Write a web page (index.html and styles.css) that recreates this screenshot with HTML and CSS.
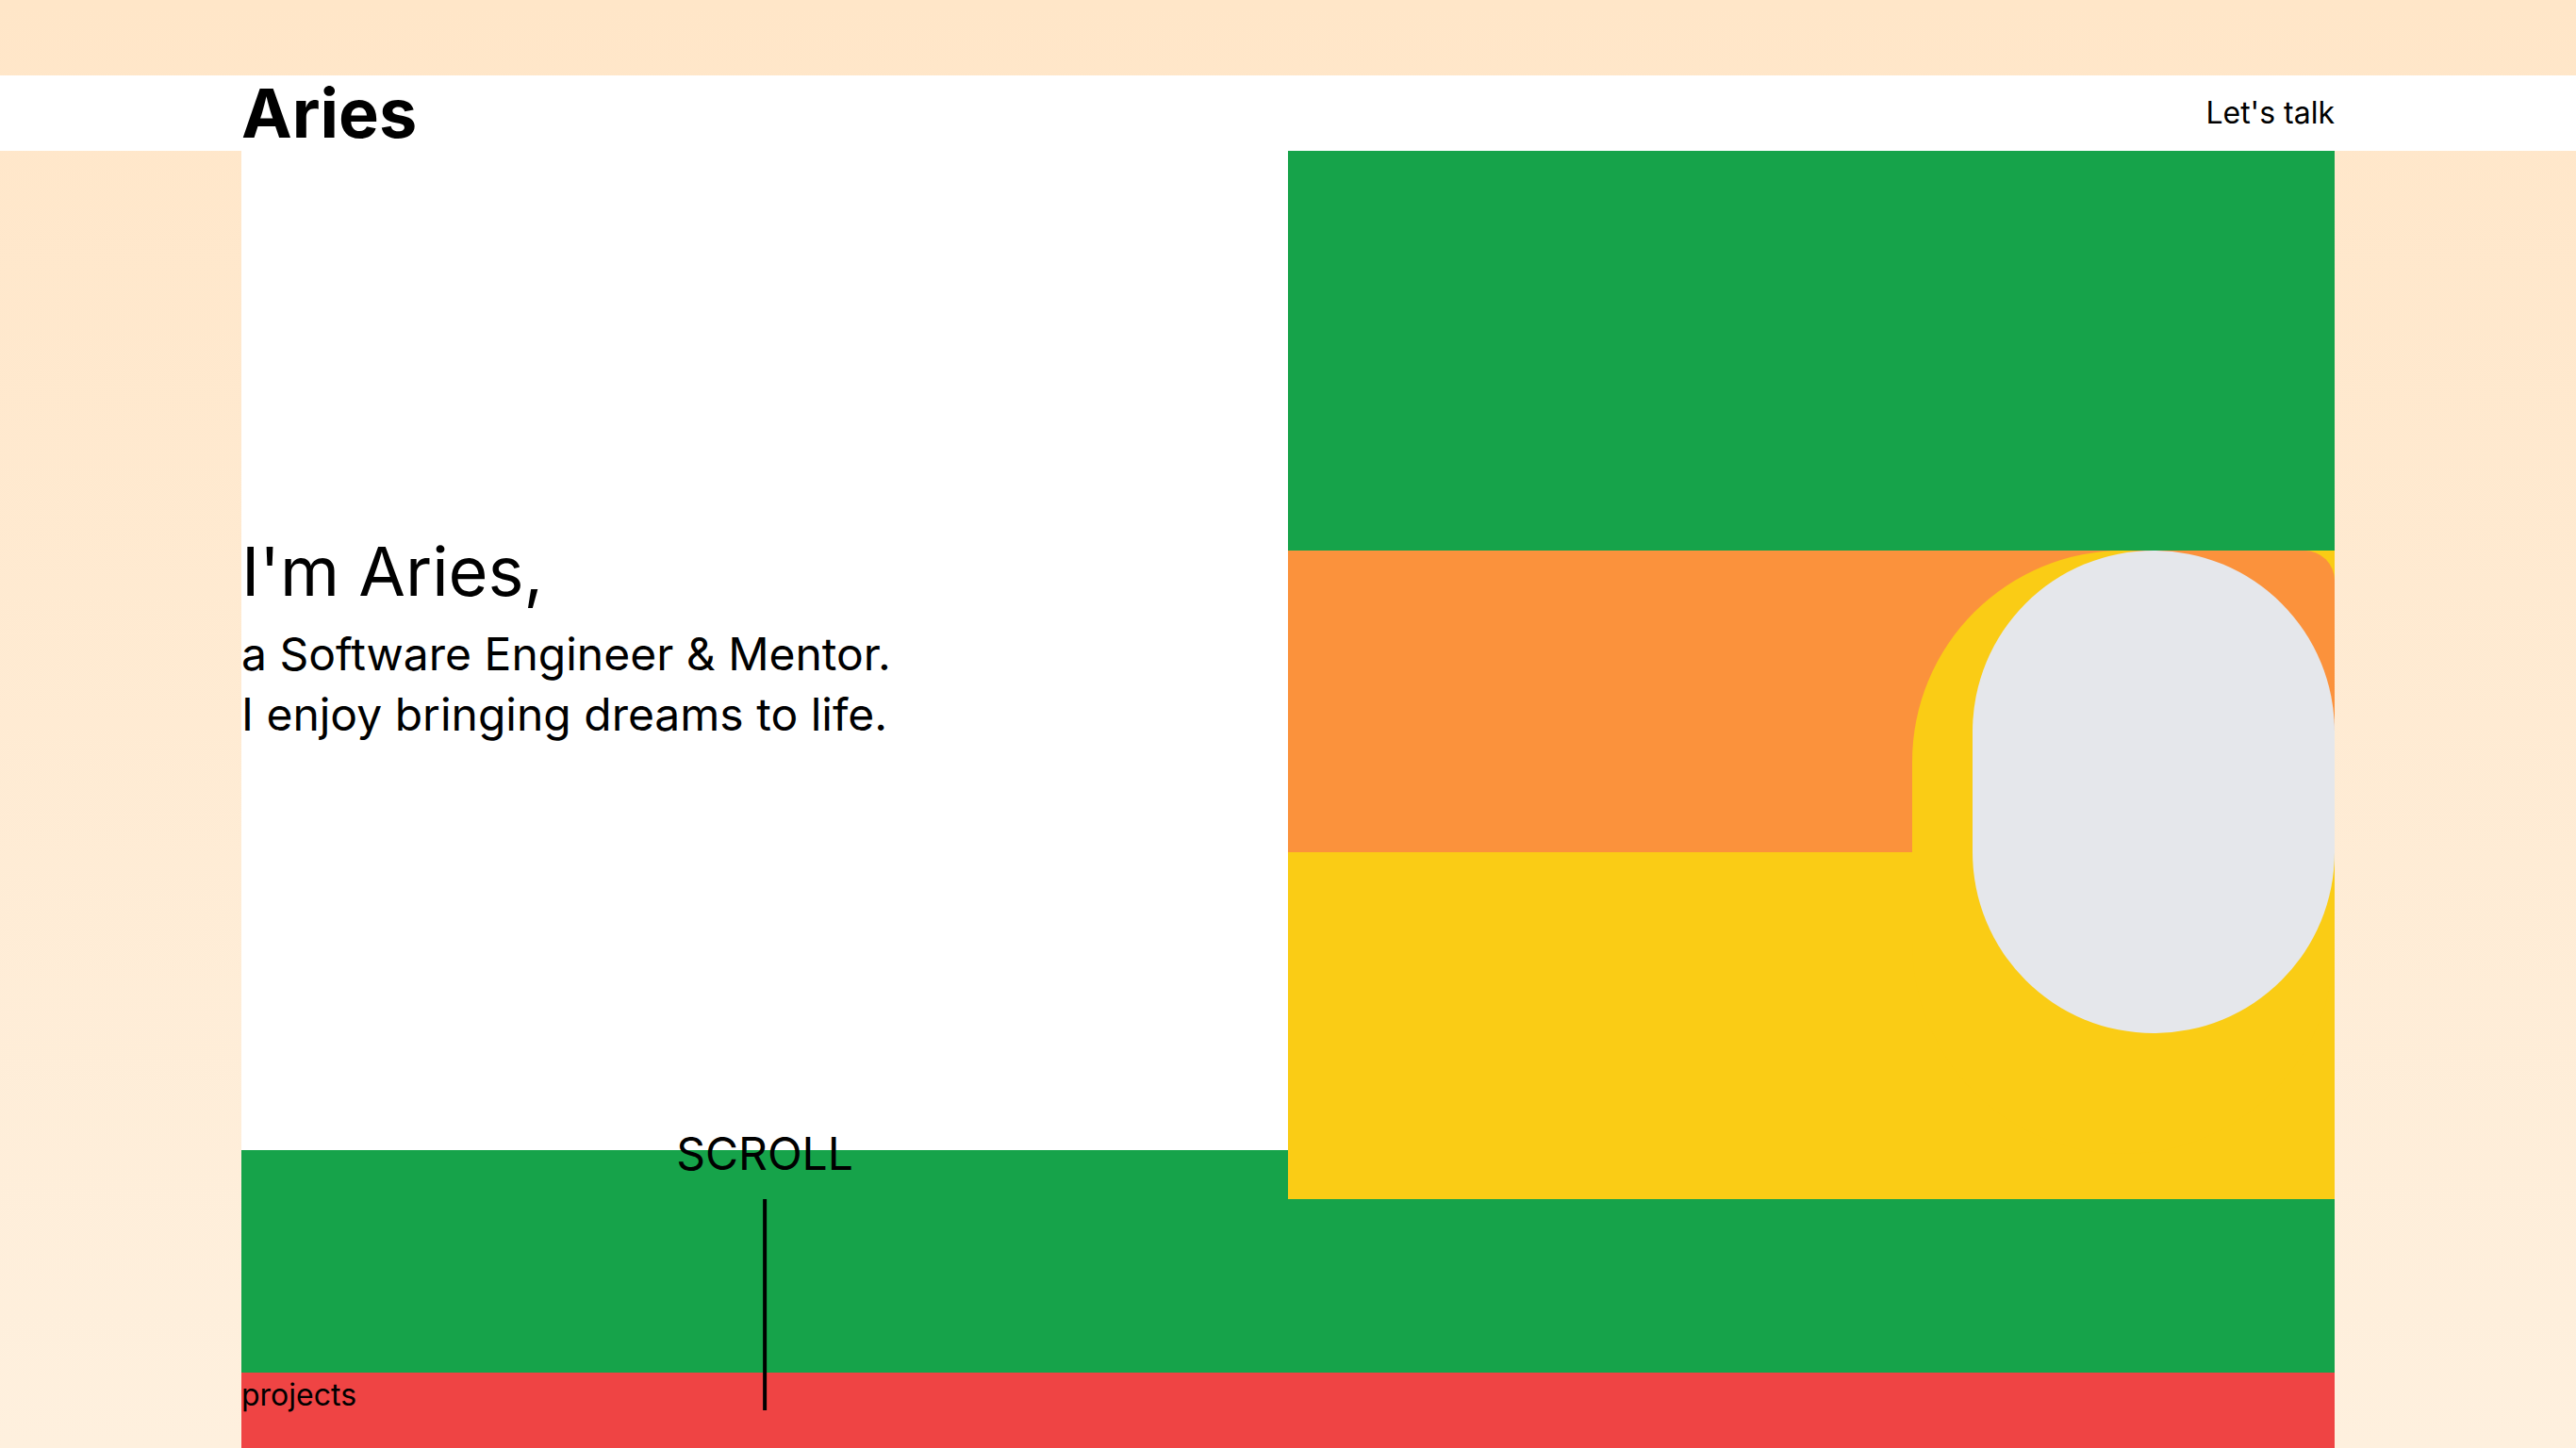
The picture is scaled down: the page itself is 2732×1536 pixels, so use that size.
FILE: index.html
```html
<!DOCTYPE html>
<html lang="en">
<head>
<meta charset="utf-8">
<title>Aries</title>
<link rel="stylesheet" href="styles.css">
</head>
<body>
<header class="site-header">
  <div class="container header-inner">
    <a class="logo" href="#">Aries</a>
    <a class="cta" href="#">Let's talk</a>
  </div>
</header>
<main class="container">
  <section class="hero">
    <div class="hero-left">
      <div class="intro">
        <h1 class="intro-title">I'm Aries,</h1>
        <p class="intro-text">a Software Engineer &amp; Mentor.<br>I enjoy bringing dreams to life.</p>
      </div>
      <div class="scroll">
        <span class="scroll-label">SCROLL</span>
        <span class="scroll-line"></span>
      </div>
    </div>
    <div class="hero-right">
      <div class="block-green"></div>
      <div class="art">
        <div class="art-orange"></div>
        <div class="art-yellow"></div>
        <div class="art-photo"></div>
      </div>
    </div>
  </section>
  <section class="band-green"></section>
  <section class="projects">
    <h2 class="projects-title">projects</h2>
  </section>
</main>
</body>
</html>
```
FILE: styles.css
```css
* { box-sizing: border-box; }

html, body { margin: 0; padding: 0; }

body {
  padding-top: 80px;
  font-family: Inter, "Noto Sans", sans-serif;
  color: #000;
  background: linear-gradient(to bottom, #ffe6c8 0%, #fef0de 100%) fixed;
  min-height: 1536px;
  overflow: hidden;
}

a { color: inherit; text-decoration: none; }

.container {
  width: 2220px;
  margin: 0 auto;
}

/* header */
.site-header {
  background: #fff;
  height: 80px;
}
.header-inner {
  height: 80px;
  display: flex;
  justify-content: space-between;
  align-items: center;
}
.logo {
  font-size: 72px;
  line-height: 80px;
  font-weight: 700;
}
.cta {
  font-size: 32px;
  line-height: 48px;
}

/* hero */
.hero {
  position: relative;
  z-index: 1;
  display: grid;
  grid-template-columns: 1fr 1fr;
  grid-template-rows: 1060px;
  height: 1060px;
}
.hero-left {
  position: relative;
  height: 1060px;
  background: #fff;
  display: flex;
  align-items: center;
  padding-bottom: 24px;
}
.intro-title {
  margin: 0;
  font-size: 72px;
  line-height: 80px;
  font-weight: 400;
}
.intro-text {
  margin: 16px 0 0;
  font-size: 48px;
  line-height: 64px;
}

.scroll {
  position: absolute;
  left: 50%;
  top: 1032px;
  transform: translateX(-50%);
  display: flex;
  flex-direction: column;
  align-items: center;
  gap: 16px;
}
.scroll-label {
  font-size: 48px;
  line-height: 64px;
}
.scroll-line {
  width: 4px;
  height: 224px;
  background: #000;
}

.hero-right {
  align-self: start;
  height: 1112px;
  display: flex;
  flex-direction: column;
}
.block-green {
  height: 424px;
  flex: none;
  background: #16a34a;
}
.art {
  position: relative;
  height: 688px;
  flex: none;
  background: #facc15;
  overflow: hidden;
}
.art-orange {
  position: absolute;
  left: 0;
  top: 0;
  width: 100%;
  height: 320px;
  background: #fb923c;
  border-top-right-radius: 32px;
}
.art-yellow {
  position: absolute;
  right: 0;
  top: 0;
  width: 448px;
  height: 640px;
  background: #facc15;
  border-radius: 9999px;
}
.art-photo {
  position: absolute;
  right: 0;
  top: 0;
  width: 384px;
  height: 512px;
  background: #e5e7eb;
  border-radius: 9999px;
}

/* bands */
.band-green {
  height: 236px;
  background: #16a34a;
}
.projects {
  height: 400px;
  background: #ef4444;
}
.projects-title {
  margin: 0;
  font-size: 32px;
  line-height: 48px;
  font-weight: 400;
}
```
